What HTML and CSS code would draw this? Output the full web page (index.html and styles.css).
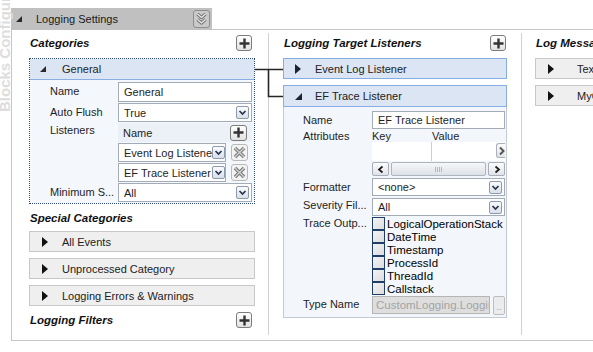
FILE: index.html
```html
<!DOCTYPE html>
<html>
<head>
  <title>Logging Settings</title>
  <link rel="stylesheet" href="styles.css">
</head>
<body>
  <div class="page">
    <div class="side-title">Blocks Configuration</div>

    <div class="settings">
      <div class="settings-head">
        <div class="head-tab">
          <svg class="tri-open" width="6" height="6"><polygon points="6,0 6,6 0,6" fill="#2a2a2a"/></svg>
          <span class="head-title">Logging Settings</span>
          <span class="collapse-btn">
            <svg width="15" height="16">
              <path d="M3.5 3 L7.5 6.5 L11.5 3 M3.5 8.5 L7.5 12 L11.5 8.5" stroke="#747474" stroke-width="3.2" fill="none" stroke-linejoin="round"/>
              <path d="M3.5 3 L7.5 6.5 L11.5 3 M3.5 8.5 L7.5 12 L11.5 8.5" stroke="#ececec" stroke-width="1.2" fill="none"/>
            </svg>
          </span>
        </div>
        <div class="head-rule"></div>
      </div>

      <div class="settings-body">
        <!-- categories -->
        <div class="col col-cat">
          <div class="col-head">
            <h2>Categories</h2>
            <span class="plus-btn"><svg width="13" height="13"><path d="M6.5 1.5 V11.5 M1.5 6.5 H11.5" stroke="#333" stroke-width="2.4"/></svg></span>
          </div>

          <div class="group">
            <div class="group-head">
              <svg class="tri-open" width="6" height="6"><polygon points="6,0 6,6 0,6" fill="#2a2a2a"/></svg>
              <span>General</span>
            </div>
            <div class="group-body">
              <div class="lbl">Name</div>
              <div class="field field-tall">General</div>

              <div class="lbl">Auto Flush</div>
              <div class="field"><span class="val">True</span><span class="dd"><svg width="11" height="11"><path d="M2.5 4 L5.5 7 L8.5 4" stroke="#26344d" stroke-width="1.7" fill="none"/></svg></span></div>

              <div class="lbl lbl-up">Listeners</div>
              <div class="lgrid">
                <div class="lhead">Name</div>
                <div class="lhead lhead-btn"><span class="plus-btn plus-sm"><svg width="13" height="13"><path d="M6.5 1.5 V11.5 M1.5 6.5 H11.5" stroke="#333" stroke-width="2.4"/></svg></span></div>

                <div class="field field-list"><span class="val">Event Log Listener</span><span class="dd"><svg width="11" height="11"><path d="M2.5 4 L5.5 7 L8.5 4" stroke="#26344d" stroke-width="1.7" fill="none"/></svg></span></div>
                <div class="xcell"><span class="x-btn"><svg width="15" height="15"><path d="M3 3 L12 12 M12 3 L3 12" stroke="#7a7a7a" stroke-width="3.6"/><path d="M3 3 L12 12 M12 3 L3 12" stroke="#d2d2d2" stroke-width="1.4"/></svg></span></div>

                <div class="field field-list"><span class="val">EF Trace Listener</span><span class="dd"><svg width="11" height="11"><path d="M2.5 4 L5.5 7 L8.5 4" stroke="#26344d" stroke-width="1.7" fill="none"/></svg></span></div>
                <div class="xcell"><span class="x-btn"><svg width="15" height="15"><path d="M3 3 L12 12 M12 3 L3 12" stroke="#7a7a7a" stroke-width="3.6"/><path d="M3 3 L12 12 M12 3 L3 12" stroke="#d2d2d2" stroke-width="1.4"/></svg></span></div>
              </div>

              <div class="lbl">Minimum S...</div>
              <div class="field"><span class="val">All</span><span class="dd"><svg width="11" height="11"><path d="M2.5 4 L5.5 7 L8.5 4" stroke="#26344d" stroke-width="1.7" fill="none"/></svg></span></div>
            </div>
          </div>

          <h2 class="sub-title">Special Categories</h2>
          <div class="bar"><svg class="tri-closed" width="6" height="10"><polygon points="0,0 6,5 0,10" fill="#111"/></svg>All Events</div>
          <div class="bar"><svg class="tri-closed" width="6" height="10"><polygon points="0,0 6,5 0,10" fill="#111"/></svg>Unprocessed Category</div>
          <div class="bar"><svg class="tri-closed" width="6" height="10"><polygon points="0,0 6,5 0,10" fill="#111"/></svg>Logging Errors &amp; Warnings</div>

          <div class="col-head filters-head">
            <h2>Logging Filters</h2>
            <span class="plus-btn"><svg width="13" height="13"><path d="M6.5 1.5 V11.5 M1.5 6.5 H11.5" stroke="#333" stroke-width="2.4"/></svg></span>
          </div>
        </div>

        <!-- listeners -->
        <div class="col col-listen">
          <div class="col-head">
            <h2>Logging Target Listeners</h2>
            <span class="plus-btn"><svg width="13" height="13"><path d="M6.5 1.5 V11.5 M1.5 6.5 H11.5" stroke="#333" stroke-width="2.4"/></svg></span>
          </div>

          <div class="bar bar-blue bar-first"><svg class="tri-closed" width="6" height="10"><polygon points="0,0 6,5 0,10" fill="#1c2433"/></svg>Event Log Listener</div>

          <div class="lgroup">
            <div class="bar bar-blue"><svg class="tri-open tri-open-bar" width="7" height="7"><polygon points="7,0 7,7 0,7" fill="#1c2433"/></svg>EF Trace Listener</div>
            <div class="lgroup-body">
              <div class="lbl">Name</div>
              <div class="field">EF Trace Listener</div>

              <div class="lbl lbl-up">Attributes</div>
              <div class="attrs">
                <div class="attr-head"><span class="k">Key</span><span>Value</span></div>
                <div class="attr-grid">
                  <span class="k-cell"></span>
                  <span class="v-cell"></span>
                  <span class="more-btn"><svg width="8" height="12"><path d="M3 2.5 L6.5 6 L3 9.5" stroke="#555" stroke-width="2" fill="none"/></svg></span>
                </div>
                <div class="hscroll">
                  <span class="sbtn"><svg width="14" height="11"><path d="M8.5 2.5 L5 5.5 L8.5 8.5" stroke="#1b1b1b" stroke-width="1.7" fill="none"/></svg></span>
                  <span class="thumb"><i></i><i></i><i></i><i></i></span>
                  <span class="sbtn"><svg width="14" height="11"><path d="M5.5 2.5 L9 5.5 L5.5 8.5" stroke="#1b1b1b" stroke-width="1.7" fill="none"/></svg></span>
                </div>
              </div>

              <div class="lbl">Formatter</div>
              <div class="field"><span class="val">&lt;none&gt;</span><span class="dd"><svg width="11" height="11"><path d="M2.5 4 L5.5 7 L8.5 4" stroke="#26344d" stroke-width="1.7" fill="none"/></svg></span></div>

              <div class="lbl">Severity Fil...</div>
              <div class="field"><span class="val">All</span><span class="dd"><svg width="11" height="11"><path d="M2.5 4 L5.5 7 L8.5 4" stroke="#26344d" stroke-width="1.7" fill="none"/></svg></span></div>

              <div class="lbl lbl-up">Trace Outp...</div>
              <div class="checks">
                <label class="check"><span class="box"></span>LogicalOperationStack</label>
                <label class="check"><span class="box"></span>DateTime</label>
                <label class="check"><span class="box"></span>Timestamp</label>
                <label class="check"><span class="box"></span>ProcessId</label>
                <label class="check"><span class="box"></span>ThreadId</label>
                <label class="check"><span class="box"></span>Callstack</label>
              </div>

              <div class="lbl">Type Name</div>
              <div class="type-row">
                <span class="field field-off">CustomLogging.LoggingListener</span>
                <span class="dots-btn">..</span>
              </div>
            </div>
          </div>
        </div>

        <!-- messages -->
        <div class="col col-msg">
          <div class="col-head">
            <h2>Log Message Formatters</h2>
          </div>
          <div class="bar bar-first"><svg class="tri-closed" width="6" height="10"><polygon points="0,0 6,5 0,10" fill="#111"/></svg>Text Formatter</div>
          <div class="bar"><svg class="tri-closed" width="6" height="10"><polygon points="0,0 6,5 0,10" fill="#111"/></svg>MyObjectFormatter</div>
        </div>

        <svg class="links" width="40" height="45">
          <path d="M3 9.5 H31 M16.5 9.5 V36.5 H31" stroke="#262626" stroke-width="1.6" fill="none"/>
        </svg>
      </div>
    </div>
  </div>
</body>
</html>
```

FILE: styles.css
```css
* {
  box-sizing: border-box;
}
body {
  margin: 0;
  background: #fff;
  font-family: "Liberation Sans", Arial, sans-serif;
  font-size: 11px;
  color: #1e1e1e;
}
.page {
  position: relative;
  width: 593px;
  height: 352px;
  padding: 8px 0 0 11px;
  overflow: hidden;
}
.side-title {
  position: absolute;
  left: -3px;
  top: 112px;
  transform-origin: 0 0;
  transform: rotate(-90deg);
  font: bold 15px/15px "Liberation Sans", sans-serif;
  color: #dddddd;
  white-space: nowrap;
}

/* header tab */
.settings-head {
  display: flex;
  height: 22px;
}
.head-tab {
  width: 201px;
  background: #c0c0c0;
  display: flex;
  align-items: center;
  padding: 0 2px 0 5px;
}
.head-title {
  margin-left: 14px;
  color: #1a1a1a;
}
.collapse-btn {
  margin-left: auto;
  width: 17px;
  height: 18px;
  border: 1px solid #8e8e8e;
  border-radius: 3px;
  background: #c9c9c9;
  display: flex;
  align-items: center;
  justify-content: center;
}
.head-rule {
  flex: 1;
  border-bottom: 1px solid #c6c6c6;
}

/* body */
.settings-body {
  position: relative;
  display: flex;
  height: 311px;
  border-left: 1px solid #c6c6c6;
  border-bottom: 1px solid #c6c6c6;
}
.col {
  flex-shrink: 0;
  margin: 3px 0 5px;
  border-right: 1px solid #d0d0d0;
}
.col-cat {
  width: 257px;
  padding: 0 13px 0 17px;
}
.col-listen {
  width: 253px;
  padding: 0 14px;
}
.col-msg {
  width: 160px;
  padding-left: 13px;
  border-right: none;
}
.col-head {
  display: flex;
  align-items: center;
  justify-content: space-between;
  height: 16px;
  margin-top: 2px;
}
h2 {
  margin: 0;
  padding-left: 1px;
  font: italic bold 11.5px "Liberation Sans", sans-serif;
  color: #111;
  white-space: nowrap;
}
.col-cat .plus-btn {
  margin-right: 3px;
}
.col-listen .col-head .plus-btn {
  margin-right: 1px;
}
.plus-btn {
  width: 16px;
  height: 16px;
  border: 1px solid #7c7c7c;
  border-radius: 3px;
  background: linear-gradient(#ffffff, #e2e2e2);
  display: flex;
  align-items: center;
  justify-content: center;
}
.plus-btn.plus-sm {
  width: 17px;
  height: 16px;
  margin: 0;
}

/* general category */
.group {
  margin-top: 7px;
  border: 1px dotted #2f4d80;
}
.group-head {
  height: 21px;
  background: #dbe5f4;
  border-bottom: 1px solid #88aee2;
  display: flex;
  align-items: center;
  padding-left: 10px;
}
.group-head span {
  margin-left: 16px;
}
.group-body {
  background: #f4f7fc;
  display: grid;
  grid-template-columns: 88px minmax(0, 1fr);
  row-gap: 1px;
  padding: 2px 2px 1px 0;
}
.lbl {
  padding: 2px 0 0 20px;
  line-height: 14px;
  white-space: nowrap;
}
.lbl-up {
  padding-top: 0;
}
.field {
  height: 19px;
  min-width: 0;
  border: 1px solid #a3abb6;
  background: #fff;
  display: flex;
  align-items: center;
  padding-left: 5px;
  white-space: nowrap;
  overflow: hidden;
}
.field-tall {
  height: 20px;
}
.val {
  flex: 1;
  min-width: 0;
  overflow: hidden;
}
.dd {
  flex-shrink: 0;
  width: 13px;
  height: 13px;
  margin-right: 2px;
  border: 1px solid #8c9ab0;
  border-radius: 2px;
  background: linear-gradient(#fafbfd, #d9e0ea);
  display: flex;
  align-items: center;
  justify-content: center;
}
.lgrid {
  display: grid;
  grid-template-columns: 108px minmax(0, 1fr);
  row-gap: 1px;
}
.lhead {
  height: 19px;
  background: #ecf0f7;
  display: flex;
  align-items: center;
  padding-left: 5px;
}
.lhead-btn {
  padding-left: 4px;
}
.field-list .dd {
  margin-right: 0;
}
.xcell {
  display: flex;
  align-items: center;
  padding-left: 5px;
}
.x-btn {
  width: 17px;
  height: 17px;
  border: 1px solid #b9b9b9;
  border-radius: 3px;
  background: #f3f3f3;
  display: flex;
  align-items: center;
  justify-content: center;
}

/* collapsed bars */
.sub-title {
  margin-top: 6px;
  line-height: 16px;
}
.bar {
  height: 21px;
  margin-top: 6px;
  display: flex;
  align-items: center;
  padding-left: 12px;
  border: 1px solid #c8c8c8;
  background: #efefef;
  color: #222;
  white-space: nowrap;
}
.sub-title + .bar {
  margin-top: 5px;
}
.tri-closed {
  flex-shrink: 0;
  margin-right: 14px;
}
.bar-blue {
  background: #dbe5f4;
  border-color: #86aee3;
}
.bar-first {
  margin-top: 7px;
}
.col-listen .bar {
  padding-left: 11px;
}
.tri-open-bar {
  margin-right: 13px;
}
.col-msg .bar {
  padding-left: 12px;
}
.col-msg .tri-closed {
  margin-right: 23px;
}
.filters-head {
  margin-top: 6px;
}

/* EF trace listener */
.lgroup {
  margin-top: 6px;
}
.lgroup .bar {
  margin-top: 0;
  height: 22px;
}
.lgroup-body {
  background: #f3f6fb;
  border: 1px solid #c2cad6;
  border-top: none;
  display: grid;
  grid-template-columns: 88px minmax(0, 1fr);
  padding: 4px 1px 2px 0;
}
.lgroup-body .lbl {
  padding-left: 19px;
}
.lgroup-body .field {
  height: 18px;
}
.attrs {
  margin-top: 2px;
  min-width: 0;
}
.attr-head {
  display: flex;
  height: 11px;
  line-height: 11px;
}
.attr-head .k {
  width: 60px;
}
.attr-grid {
  display: flex;
  height: 19px;
  background: #fff;
}
.k-cell {
  width: 60px;
  border-right: 1px solid #c9ced6;
}
.v-cell {
  flex: 1;
}
.more-btn {
  width: 9px;
  height: 15px;
  margin: 1px 0 0;
  border: 1px solid #a9b0ba;
  border-right: none;
  border-radius: 3px 0 0 3px;
  background: linear-gradient(#fbfbfb, #e1e4e8);
  display: flex;
  align-items: center;
}
.hscroll {
  display: flex;
  height: 14px;
  margin-top: 1px;
  background: #eef0f3;
}
.sbtn {
  width: 17px;
  border: 1px solid #a6aeb9;
  border-radius: 2px;
  background: linear-gradient(#fdfdfd, #e0e3e8);
  display: flex;
  align-items: center;
  justify-content: center;
}
.thumb {
  flex: 1;
  margin: 0 2px;
  border: 1px solid #aeb5bf;
  border-radius: 2px;
  background: linear-gradient(#f6f7f9, #dde1e6);
  display: flex;
  align-items: center;
  justify-content: center;
  gap: 1px;
}
.thumb i {
  width: 1px;
  height: 5px;
  background: #b4b9c1;
}
.lgroup-body .attrs + .lbl,
.lgroup-body .attrs + .lbl + .field {
  margin-top: 2px;
}
.lgroup-body .field + .lbl + .field {
  margin-top: 2px;
}
.checks {
  display: flex;
  flex-direction: column;
  padding-top: 1px;
}
.check {
  display: flex;
  align-items: center;
  height: 13px;
  color: #000;
  font-size: 11.5px;
}
.box {
  width: 13px;
  height: 13px;
  margin-right: 2px;
  border: 1px solid #1f3e6b;
  background: linear-gradient(135deg, #f4f4f4, #dcdcdc);
}
.type-row {
  display: flex;
  min-width: 0;
  height: 19px;
  margin-top: 1px;
}
.field-off {
  flex: 1;
  height: 19px;
  background: #dedede;
  border-color: #b5b5b5;
  color: #a4a4a4;
  padding-left: 3px;
  font-size: 11.5px;
}
.dots-btn {
  flex-shrink: 0;
  width: 12px;
  margin-left: 3px;
  border: 1px solid #bdbdbd;
  border-radius: 2px;
  background: #ececec;
  color: #9a9a9a;
  font-size: 9px;
  line-height: 20px;
  text-align: center;
}

/* connectors between category and listeners */
.links {
  position: absolute;
  left: 240px;
  top: 30px;
}
```
